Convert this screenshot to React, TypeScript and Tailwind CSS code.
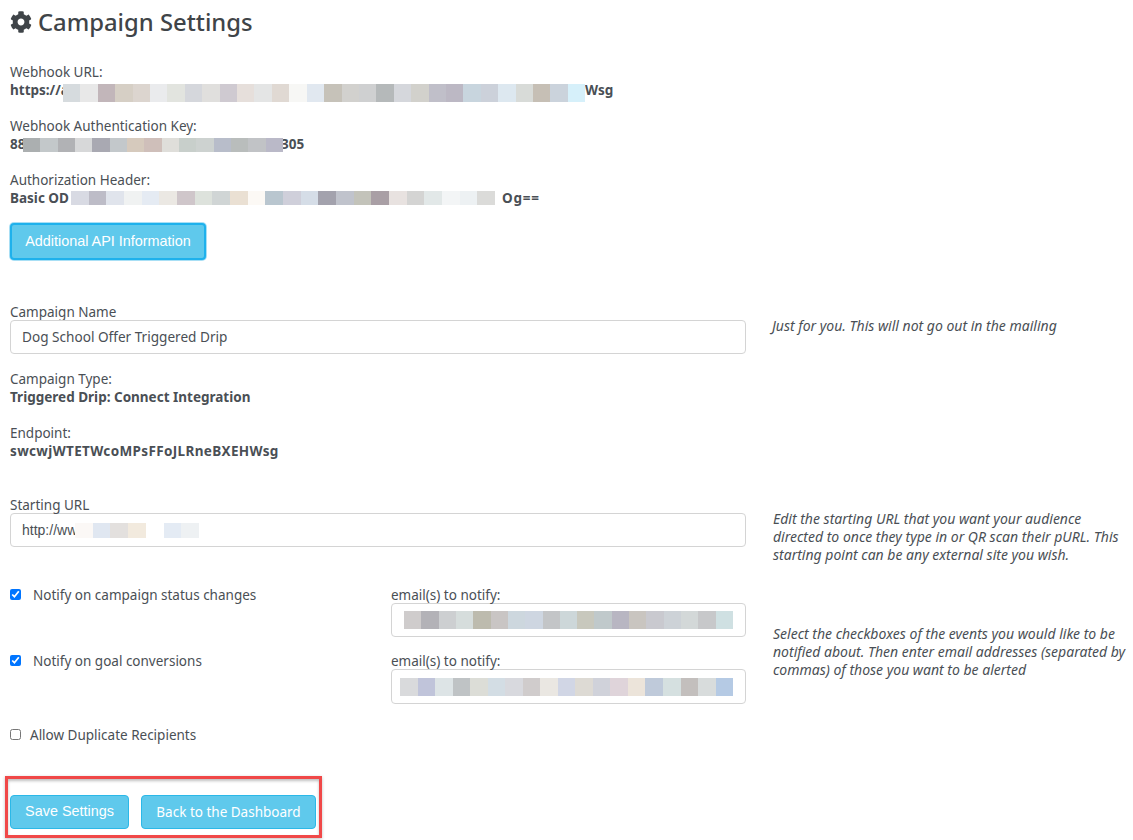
import { FaCog } from "react-icons/fa";

const urlTiles = ["#d6dbde", "#e8e8e8", "#c2b6ba", "#d6cfc5", "#dcd5cf", "#eaebed", "#e2e4df", "#d5d7dc", "#e0dfdd", "#cfcad1", "#e6dfdb", "#e4e5e5", "#e0d9d3", "#f7f7f5", "#e1e8f0", "#c6c2b9", "#d2d1ce", "#cfd0d1", "#b5b9ba", "#d5d7dc", "#d2d1cc", "#c0bfc9", "#bcb8c4", "#c8d5de", "#ccd1da", "#dde8f0", "#d8dbd8", "#c6bfb5", "#cbd3dc", "#d6f0fa"];
const keyTiles = ["#abafb0", "#c3c8ca", "#b1b2b5", "#d7d8d9", "#a9a9b2", "#c3c8cb", "#d6cabd", "#cfbfba", "#dfdeda", "#c8cfcb", "#cdd2d0", "#b8bdca", "#b9bdbc", "#c1c3c6", "#bab9c8"];
const authTiles = ["#d8dae3", "#bdbcc7", "#e0e4ec", "#f0f2f2", "#e5ebf3", "#ebe8e3", "#cfc6ca", "#dde2dc", "#d0d5d5", "#eae0d3", "#fcf9f5", "#b9c6cf", "#cfcfda", "#d5dde7", "#a3a2ad", "#c0c3cc", "#c3c3ba", "#a99fa5", "#e8e2e0", "#d4d4d3", "#e2e8e8", "#f3f5f6", "#edf1f3", "#dbdbd9"];
const urlInputTiles = ["#fbf8f6", "#e0e7f1", "#e3e0de", "#f2eade", "#ffffff", "#e4ebf4", "#eef1f3"];
const emailTiles1 = ["#cfcccc", "#b3b2b7", "#cdcfd1", "#d6dddc", "#bdbbae", "#c9c5c4", "#cdd7de", "#ced6e1", "#c3c5c7", "#cdd7d9", "#c8c8bd", "#c0c9cb", "#b8b6c2", "#c9c5c0", "#c9c9cf", "#cdd2d7", "#d3d8d8", "#c7c8ca", "#cfe0e2"];
const emailTiles2 = ["#d9dadc", "#c0c4da", "#dde4e6", "#bfc3c5", "#dcddd7", "#d3dde4", "#d8d9de", "#d0cccc", "#eae7e2", "#d1d6e5", "#dddad4", "#d0d2da", "#dfd4da", "#ece4da", "#bfcada", "#d5e0e0", "#c3bfbd", "#d8dcdc", "#b5cae4"];

function Mosaic({ tiles, className }: { tiles: string[]; className: string }) {
  return (
    <span className={`relative flex ${className}`}>
      {tiles.map((color, i) => (
        <span key={i} className="flex-1" style={{ backgroundColor: color }} />
      ))}
    </span>
  );
}

function Info({ label, children }: { label: string; children: React.ReactNode }) {
  return (
    <div className="mb-[18px]">
      <div className="h-[18px]">{label}</div>
      <div className="h-[18px] font-bold">{children}</div>
    </div>
  );
}

const primaryBtn =
  "h-[34px] rounded-[4px] border border-[#2bb8e8] bg-[#5fc9ec] text-white";

export default function App() {
  return (
    <div className="h-[840px] overflow-hidden bg-white pl-[10px] pt-[4px] font-['Noto_Sans',sans-serif] text-[13.5px] leading-[18px] text-[#4a4f55]">
      <h1 className="flex h-[36px] items-center gap-[6px] text-[23.8px] font-medium text-[#3f4448]">
        <FaCog className="h-[22px] w-[22px]" />
        Campaign Settings
      </h1>

      <div className="mt-[23px]">
        <Info label="Webhook URL:">
          <span className="flex h-[18px] items-center">
            <span className="w-[53px] whitespace-nowrap">https://a</span>
            <Mosaic tiles={urlTiles} className="h-[18px] w-[522px] translate-y-[3px]" />
            <span>Wsg</span>
          </span>
        </Info>
        <Info label="Webhook Authentication Key:">
          <span className="flex h-[18px] items-center">
            <span className="w-[13px] whitespace-nowrap">88</span>
            <Mosaic tiles={keyTiles} className="h-[14px] w-[260px] translate-y-[1px]" />
            <span className="ml-[-2px]">305</span>
          </span>
        </Info>
        <Info label="Authorization Header:">
          <span className="flex h-[18px] items-center">
            <span className="w-[61px] whitespace-nowrap">Basic OD</span>
            <Mosaic tiles={authTiles} className="h-[14px] w-[424px]" />
            <span className="ml-[7px] tracking-[0.8px]">Og==</span>
          </span>
        </Info>
      </div>

      <button className="mt-[-2px] flex h-[37px] w-[196px] items-center justify-center rounded-[4px] border-2 border-[#1eb1ec] bg-[#5fc9ec] pb-[2px] font-['Liberation_Sans',sans-serif] text-[14.4px] text-white shadow-[0_0_0_1px_#a8dff5]">
        Additional API Information
      </button>

      <div className="mt-[43px] flex gap-[26px]">
        <div className="w-[736px]">
          <div className="h-[17px]">Campaign Name</div>
          <input
            readOnly
            value="Dog School Offer Triggered Drip"
            className="h-[34px] w-full rounded-[4px] border border-[#d4d4d4] px-[11px] pb-[1px] text-[13.6px] text-[#4a4f55]"
          />
          <div className="mt-[16px]">
            <Info label="Campaign Type:">Triggered Drip: Connect Integration</Info>
            <Info label="Endpoint:">
              <span className="tracking-[0.35px]">swcwjWTETWcoMPsFFoJLRneBXEHWsg</span>
            </Info>
          </div>
        </div>
        <p className="pt-[14px] text-[14px] italic">Just for you. This will not go out in the mailing</p>
      </div>

      <div className="mt-[18px] flex gap-[27px]">
        <div className="w-[736px]">
          <div className="h-[17px]">Starting URL</div>
          <div className="flex h-[34px] items-center rounded-[4px] border border-[#d4d4d4] pl-[11px] font-['Liberation_Sans',sans-serif] text-[14px]">
            <span className="w-[53px] whitespace-nowrap">http://www</span>
            <Mosaic tiles={urlInputTiles} className="h-[15px] w-[124px]" />
          </div>
        </div>
        <p className="pt-[14px] text-[14px] italic">
          Edit the starting URL that you want your audience
          <br />
          directed to once they type in or QR scan their pURL. This
          <br />
          starting point can be any external site you wish.
        </p>
      </div>

      <div className="mt-[22px] flex gap-[27px]">
        <div className="w-[736px]">
          <div className="flex">
            <label className="flex h-[18px] w-[381px] items-center">
              <input type="checkbox" defaultChecked readOnly className="m-0 mb-[2px] mr-[12px] h-[11px] w-[11px]" />
              Notify on campaign status changes
            </label>
            <div className="flex-1">
              <div className="h-[17px]">email(s) to notify:</div>
              <div className="flex h-[34px] items-center rounded-[4px] border border-[#d4d4d4] pl-[12px] pr-[12px]">
                <Mosaic tiles={emailTiles1} className="h-[18px] w-full" />
              </div>
            </div>
          </div>
          <div className="mt-[15px] flex">
            <label className="flex h-[18px] w-[381px] items-center">
              <input type="checkbox" defaultChecked readOnly className="m-0 mb-[2px] mr-[12px] h-[11px] w-[11px]" />
              Notify on goal conversions
            </label>
            <div className="flex-1">
              <div className="h-[17px]">email(s) to notify:</div>
              <div className="flex h-[35px] items-center rounded-[4px] border border-[#d4d4d4] pl-[8px] pr-[12px]">
                <Mosaic tiles={emailTiles2} className="h-[18px] w-full" />
              </div>
            </div>
          </div>
        </div>
        <p className="pt-[39px] text-[14px] italic">
          Select the checkboxes of the events you would like to be
          <br />
          notified about. Then enter email addresses (separated by
          <br />
          commas) of those you want to be alerted
        </p>
      </div>

      <label className="mt-[22px] flex h-[18px] items-center">
        <input type="checkbox" className="m-0 mb-[1px] mr-[9px] h-[11px] w-[11px]" />
        Allow Duplicate Recipients
      </label>

      <div className="ml-[-5px] mt-[32px] flex h-[62px] w-[317px] items-center gap-[12px] border-[3px] border-[#f04848] pl-[2px] pt-[9px] shadow-[inset_0_2px_3px_rgba(0,0,0,0.25),0_1px_3px_rgba(0,0,0,0.25)]">
        <button className={`${primaryBtn} w-[119px] pb-[2px] font-['Liberation_Sans',sans-serif] text-[14.4px]`}>
          Save Settings
        </button>
        <button className={`${primaryBtn} w-[175px] text-[13.5px]`}>Back to the Dashboard</button>
      </div>
    </div>
  );
}
